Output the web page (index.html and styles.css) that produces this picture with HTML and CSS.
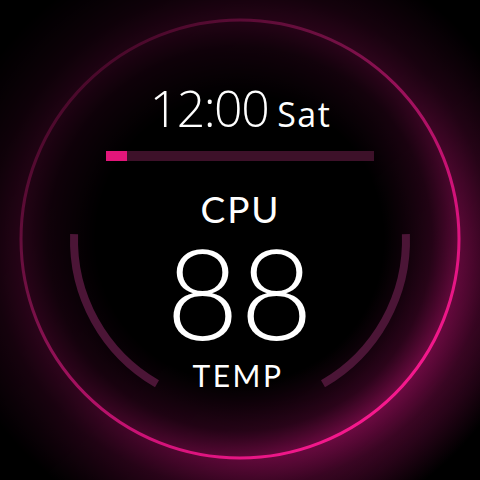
FILE: index.html
```html
<!DOCTYPE html>
<html>
<head>
<meta charset="utf-8">
<link rel="stylesheet" href="styles.css">
</head>
<body>
<div class="face">
  <svg class="deco" viewBox="0 0 480 480" width="480" height="480">
    <defs>
      <linearGradient id="ringGrad" x1="0.1" y1="0.05" x2="0.85" y2="0.95">
        <stop offset="0" stop-color="#3c0622"/>
        <stop offset="0.35" stop-color="#741045"/>
        <stop offset="0.7" stop-color="#d01278"/>
        <stop offset="1" stop-color="#ff1a92"/>
      </linearGradient>
      <radialGradient id="halo" gradientUnits="userSpaceOnUse" cx="240" cy="239" r="320">
        <stop offset="0.45" stop-color="#b0106a" stop-opacity="0"/>
        <stop offset="0.6" stop-color="#b0106a" stop-opacity="0.3"/>
        <stop offset="0.685" stop-color="#b0106a" stop-opacity="0.7"/>
        <stop offset="0.78" stop-color="#b0106a" stop-opacity="0.35"/>
        <stop offset="0.95" stop-color="#b0106a" stop-opacity="0"/>
      </radialGradient>
      <linearGradient id="dirGrad" gradientUnits="userSpaceOnUse" x1="60" y1="40" x2="420" y2="440">
        <stop offset="0" stop-color="#fff" stop-opacity="0.22"/>
        <stop offset="0.5" stop-color="#fff" stop-opacity="0.4"/>
        <stop offset="1" stop-color="#fff" stop-opacity="1"/>
      </linearGradient>
      <mask id="dirMask" maskUnits="userSpaceOnUse" x="0" y="0" width="480" height="480">
        <rect x="0" y="0" width="480" height="480" fill="url(#dirGrad)"/>
      </mask>
    </defs>
    <rect x="0" y="0" width="480" height="480" fill="url(#halo)" mask="url(#dirMask)"/>
    <circle cx="240" cy="239" r="219" fill="none" stroke="url(#ringGrad)" stroke-width="3"/>
    <path d="M74.1 234.2 A166 166 0 0 0 157 383.8" fill="none" stroke="#4b1536" stroke-width="8"/>
    <path d="M405.9 234.2 A166 166 0 0 1 323 383.8" fill="none" stroke="#4b1536" stroke-width="8"/>
  </svg>
  <div class="content">
    <div class="time-row">
      <span class="time">12:00</span>
      <span class="day">Sat</span>
    </div>
    <div class="bar"><div class="bar-fill" style="width:21px"></div></div>
    <div class="label">CPU</div>
    <div class="value">88</div>
    <div class="unit">TEMP</div>
  </div>
</div>
</body>
</html>
```
FILE: styles.css
```css
html, body {
  margin: 0;
  padding: 0;
  background: #000;
}
.face {
  position: relative;
  width: 480px;
  height: 480px;
  overflow: hidden;
  background: #000;
  color: #fff;
}
.deco {
  position: absolute;
  left: 0;
  top: 0;
}
.content {
  position: relative;
  display: flex;
  flex-direction: column;
  align-items: center;
  padding-top: 83px;
}
.time-row {
  display: flex;
  align-items: baseline;
  gap: 9px;
  margin-left: 1px;
}
.time {
  font-family: "Open Sans", sans-serif;
  font-weight: 300;
  font-size: 50px;
  line-height: 1;
  letter-spacing: -1.5px;
}
.day {
  font-family: "Open Sans", sans-serif;
  font-weight: 400;
  font-size: 34px;
  line-height: 1;
  letter-spacing: 1.5px;
}
.bar {
  margin-top: 18px;
  width: 268px;
  height: 10px;
  background: #3d1129;
  display: flex;
}
.bar-fill {
  height: 100%;
  background: #e3167a;
}
.label {
  margin-top: 33px;
  margin-left: 1px;
  font-family: "Lato", sans-serif;
  font-weight: 400;
  font-size: 37px;
  line-height: 0.8;
  letter-spacing: 2px;
}
.value {
  margin-top: 18px;
  font-family: "Lato", sans-serif;
  font-weight: 300;
  font-size: 126px;
  line-height: 0.8;
  letter-spacing: 1px;
}
.unit {
  margin-top: 21px;
  margin-right: 4px;
  font-family: "Lato", sans-serif;
  font-weight: 400;
  font-size: 30px;
  line-height: 0.8;
  letter-spacing: 2.5px;
}
```
